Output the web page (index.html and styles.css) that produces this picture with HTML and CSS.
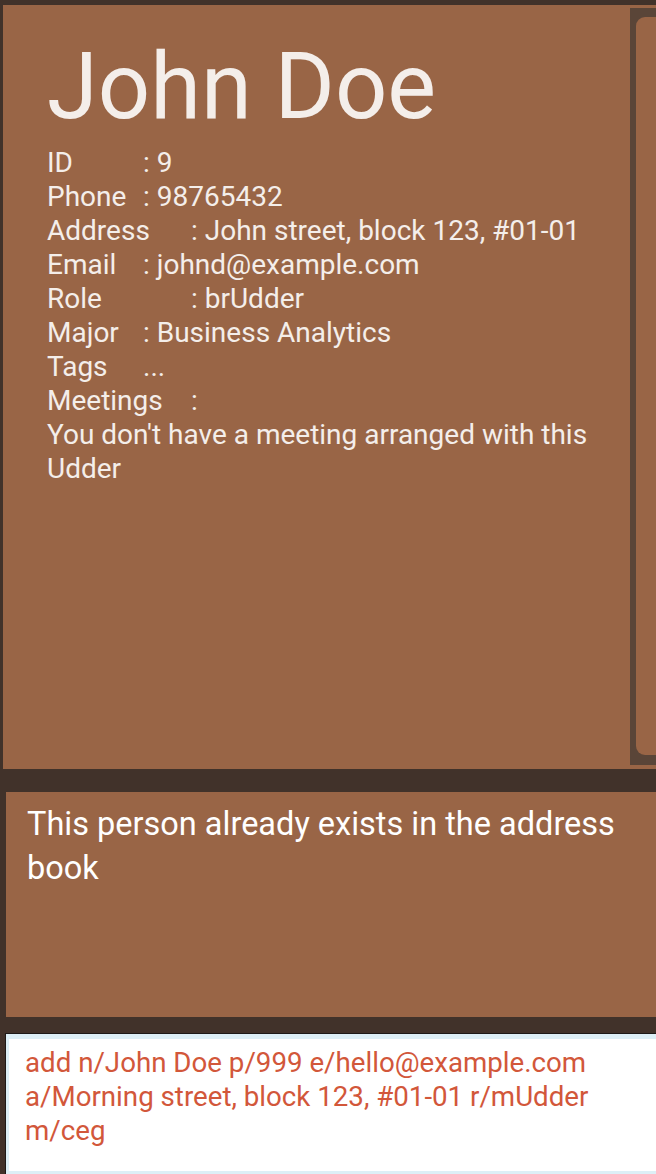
FILE: index.html
```html
<!DOCTYPE html>
<html>
<head>
<meta charset="utf-8">
<link rel="stylesheet" href="styles.css">
</head>
<body>
<div class="app">
  <section class="person-panel">
    <div class="person-card">
      <h1 class="name">John Doe</h1>
      <div class="details">
        <div class="row">ID		: 9</div>
        <div class="row">Phone	: 98765432</div>
        <div class="row">Address	: John street, block 123, #01-01</div>
        <div class="row">Email	: johnd@example.com</div>
        <div class="row">Role		: brUdder</div>
        <div class="row">Major	: Business Analytics</div>
        <div class="row">Tags	...</div>
        <div class="row">Meetings	:</div>
        <div class="row wrap">You don't have a meeting arranged with this Udder</div>
      </div>
    </div>
    <div class="scroll-track"><div class="scroll-thumb"></div></div>
  </section>
  <section class="result-panel">
    <p class="result-text">This person already exists in the address book</p>
  </section>
  <section class="command-panel">
    <div class="command-box">
      <p class="command-text">add n/John Doe p/999 e/hello@example.com a/Morning street, block 123, #01-01 r/mUdder m/ceg</p>
    </div>
  </section>
</div>
</body>
</html>
```

FILE: styles.css
```css
html, body {
  margin: 0;
  padding: 0;
}
body {
  width: 656px;
  height: 1174px;
  overflow: hidden;
  background: #41322a;
  font-family: Roboto, "Liberation Sans", sans-serif;
}
.app {
  display: flex;
  flex-direction: column;
  height: 1174px;
}
.person-panel {
  display: flex;
  height: 764px;
  margin: 5px 0 0 3px;
  background: #996546;
}
.person-card {
  flex: 1;
  padding: 36px 30px 0 44px;
  color: #f4eeea;
}
.name {
  margin: 0;
  font-size: 92px;
  line-height: 92px;
  font-weight: 400;
  letter-spacing: 0;
}
.details {
  margin-top: 13px;
  font-size: 28px;
  line-height: 34px;
}
.row {
  white-space: pre;
  tab-size: 48px;
  -moz-tab-size: 48px;
}
.row.wrap {
  white-space: normal;
}
.scroll-track {
  width: 20px;
  margin: 3px 0 4px;
  padding: 9px 0 10px 6px;
  background: #5a4538;
  overflow: hidden;
}
.scroll-thumb {
  width: 30px;
  height: 100%;
  background: #996546;
  border-radius: 9px;
}
.result-panel {
  height: 225px;
  margin: 23px 0 0 6px;
  padding: 10px 18px 0 21px;
  box-sizing: border-box;
  background: #996546;
}
.result-text {
  margin: 0;
  font-size: 32.5px;
  line-height: 44px;
  color: #ffffff;
}
.command-panel {
  flex: 1;
  margin: 16px 0 0 5px;
  border-top: 1px solid #1e1a18;
  border-left: 1px solid #1e1a18;
  background: #ffffff;
}
.command-box {
  height: 100%;
  box-sizing: border-box;
  border: 3px solid #ddeff6;
  border-right: none;
  border-top-width: 5px;
  background: #ffffff;
  padding: 7px 18px 0 16px;
}
.command-text {
  margin: 0;
  font-size: 27.7px;
  line-height: 34px;
  color: #d2573a;
}
```
